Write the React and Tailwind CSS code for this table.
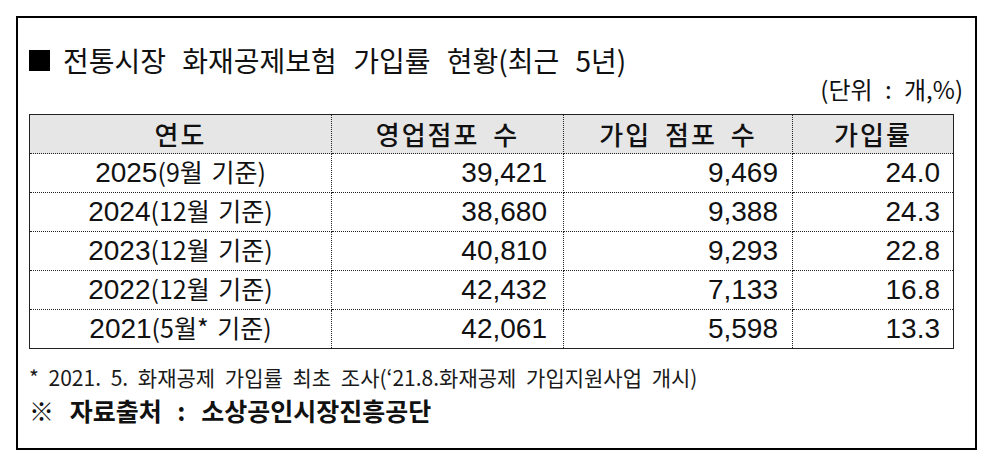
const rows = [
  { year: "2025", note: "(9월 기준)", shops: "39,421", joined: "9,469", rate: "24.0" },
  { year: "2024", note: "(12월 기준)", shops: "38,680", joined: "9,388", rate: "24.3" },
  { year: "2023", note: "(12월 기준)", shops: "40,810", joined: "9,293", rate: "22.8" },
  { year: "2022", note: "(12월 기준)", shops: "42,432", joined: "7,133", rate: "16.8" },
  { year: "2021", note: "(5월* 기준)", shops: "42,061", joined: "5,598", rate: "13.3" },
];

const sans = { fontFamily: '"Liberation Sans", "Noto Sans CJK KR", sans-serif' };
const kr = { fontFamily: '"Noto Sans CJK KR", "Liberation Sans", sans-serif' };

const cell = "border border-dotted border-[#222]";

export default function App() {
  return (
    <div className="w-[989px] h-[467px] bg-white pt-[16px] pl-[16px] text-[#111]" style={sans}>
      <div className="w-[961px] h-[434px] border-2 border-black flex flex-col">
        <h1
          className="mt-[26px] ml-[11px] flex items-center text-[28px] leading-[32px] font-normal [word-spacing:10px]"
          style={kr}
        >
          <span className="inline-block w-[21px] h-[21px] bg-black mr-[13px]" />
          전통시장 화재공제보험 가입률 현황(최근 5년)
        </h1>
        <div className="self-end mr-[12px] text-[24px] leading-[26px] [word-spacing:7px]" style={kr}>
          (단위 : 개,%)
        </div>

        <table className="ml-[11px] mt-[12px] w-[924px] border-collapse border border-solid border-[#222] table-fixed">
          <colgroup>
            <col className="w-[302px]" />
            <col className="w-[232px]" />
            <col className="w-[229px]" />
            <col className="w-[161px]" />
          </colgroup>
          <thead>
            <tr className="h-[39px] bg-[#e6e6e6] text-[26px] leading-none tracking-[2px] [word-spacing:6px]" style={kr}>
              <th className={`${cell} font-medium`}>연도</th>
              <th className={`${cell} font-medium`}>영업점포 수</th>
              <th className={`${cell} font-medium`}>가입 점포 수</th>
              <th className={`${cell} font-medium`}>가입률</th>
            </tr>
          </thead>
          <tbody className="text-[28px] leading-none">
            {rows.map((r) => (
              <tr key={r.year} className="h-[39px]">
                <td className={`${cell} text-center`}>
                  {r.year}
                  <span className="text-[25px] [word-spacing:3px]" style={kr}>
                    {r.note}
                  </span>
                </td>
                <td className={`${cell} text-right pr-[16px]`}>{r.shops}</td>
                <td className={`${cell} text-right pr-[14px]`}>{r.joined}</td>
                <td className={`${cell} text-right pr-[13px]`}>{r.rate}</td>
              </tr>
            ))}
          </tbody>
        </table>

        <p className="ml-[11px] mt-[14px] text-[21px] leading-[28px] text-[#1a1a1a] [word-spacing:5px]" style={kr}>
          * 2021. 5. 화재공제 가입률 최초 조사(‘21.8.화재공제 가입지원사업 개시)
        </p>
        <p className="ml-[11px] mt-[4px] text-[25px] leading-[30px] font-bold [word-spacing:10px]" style={kr}>
          ※ 자료출처 : 소상공인시장진흥공단
        </p>
      </div>
    </div>
  );
}
